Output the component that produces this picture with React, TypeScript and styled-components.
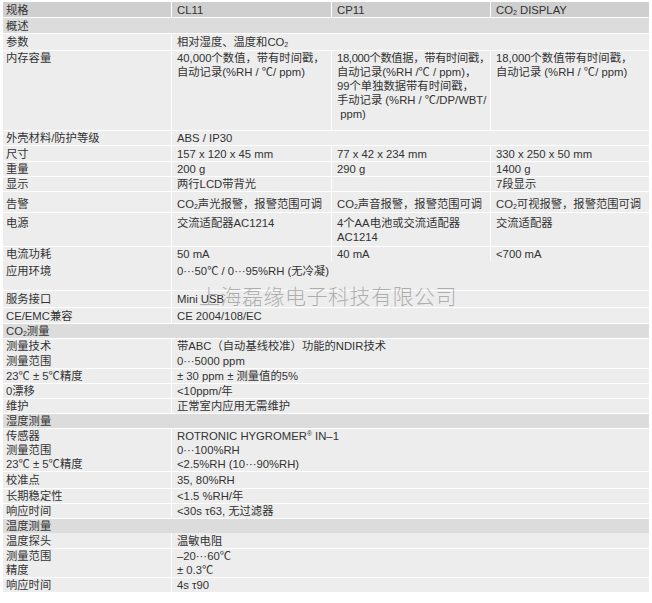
import React from "react";
import styled, { createGlobalStyle } from "styled-components";

const Global = createGlobalStyle`
  html, body { margin: 0; padding: 0; background: #ffffff; }
  body {
    font-family: "Liberation Sans", "Noto Sans CJK SC", Arial, sans-serif;
    color: #333333;
  }
`;

const Page = styled.div`
  position: relative;
  padding: 2px 3px;
  width: 646px;
`;

const Table = styled.div`
  display: flex;
  flex-direction: column;
  gap: 1px;
  width: 646px;
`;

const Row = styled.div<{ $h: number }>`
  display: grid;
  grid-template-columns: 168px 159px 158px 158px;
  column-gap: 1px;
  height: ${(p) => p.$h}px;
`;

type Kind = "head" | "section" | "body";

const bg: Record<Kind, string> = {
  head: "#cfcfcf",
  section: "#dcdcdc",
  body: "#ededed",
};

const Cell = styled.div<{ $kind: Kind; $span?: number; $pt?: number; $label?: boolean }>`
  grid-column: span ${(p) => p.$span ?? 1};
  background: ${(p) => bg[p.$kind]};
  display: flex;
  flex-direction: column;
  justify-content: ${(p) => (p.$pt === undefined ? "center" : "flex-start")};
  padding-top: ${(p) => p.$pt ?? 0}px;
  padding-left: ${(p) => (p.$label ? 3 : 5)}px;
  box-sizing: border-box;
  font-size: 11.3px;
  line-height: 14px;
  white-space: nowrap;
  overflow: visible;
  position: relative;
  z-index: 1;
`;

const Line = styled.span<{ $tight?: boolean }>`
  display: block;
  height: 14px;
  letter-spacing: ${(p) => (p.$tight ? "-0.35px" : "0")};
`;

const Sub = styled.span`
  font-size: 0.62em;
  vertical-align: -1px;
  line-height: 0;
`;

const Sup = styled.span`
  font-size: 0.6em;
  vertical-align: 4px;
  line-height: 0;
`;

const Watermark = styled.div`
  position: absolute;
  left: 199px;
  top: 282px;
  font-family: "Noto Sans CJK SC", sans-serif;
  font-weight: 300;
  font-size: 21px;
  line-height: 26px;
  letter-spacing: 0.5px;
  color: rgba(110, 110, 110, 0.5);
  white-space: nowrap;
  z-index: 2;
  pointer-events: none;
`;

const CO2 = () => (
  <>
    CO<Sub>2</Sub>
  </>
);

type Val = React.ReactNode | React.ReactNode[];

type RowSpec =
  | { type: "section"; h: number; label: React.ReactNode }
  | { type: "span"; h: number; label: React.ReactNode; value: Val; pt?: number }
  | { type: "three"; h: number; label: React.ReactNode; values: Val[]; pt?: number; tight?: number };

const rows: RowSpec[] = [
  { type: "section", h: 15, label: "概述" },
  { type: "span", h: 16, label: "参数", value: <>相对湿度、温度和<CO2 /></> },
  {
    type: "three",
    h: 79,
    pt: 0,
    tight: 1,
    label: "内存容量",
    values: [
      ["40,000个数值，带有时间戳，", "自动记录(%RH / ℃/ ppm)"],
      [
        "18,000个数值据，带有时间戳，",
        "自动记录(%RH /℃ / ppm)，",
        "99个单独数据带有时间戳，",
        "手动记录 (%RH / ℃/DP/WBT/",
        "\u00a0ppm)",
      ],
      ["18,000个数值带有时间戳，", "自动记录 (%RH / ℃/ ppm)"],
    ],
  },
  { type: "span", h: 14, label: "外壳材料/防护等级", value: "ABS / IP30" },
  {
    type: "three",
    h: 15,
    label: "尺寸",
    values: ["157 x 120 x 45 mm", "77 x 42 x 234 mm", "330 x 250 x 50 mm"],
  },
  { type: "three", h: 14, label: "重量", values: ["200 g", "290 g", "1400 g"] },
  { type: "three", h: 14, label: "显示", values: ["两行LCD带背光", "", "7段显示"] },
  {
    type: "three",
    h: 20,
    pt: 5,
    label: "告警",
    values: [
      <><CO2 />声光报警，报警范围可调</>,
      <><CO2 />声音报警，报警范围可调</>,
      <><CO2 />可视报警，报警范围可调</>,
    ],
  },
  {
    type: "three",
    h: 33,
    pt: 3,
    label: "电源",
    values: ["交流适配器AC1214", ["4个AA电池或交流适配器", "AC1214"], "交流适配器"],
  },
  { type: "three", h: 13, label: "电流功耗", values: ["50 mA", "40 mA", "<700 mA"] },
  { type: "span", h: 29, pt: 3, label: "应用环境", value: "0···50℃ / 0···95%RH (无冷凝)" },
  { type: "span", h: 16, label: "服务接口", value: "Mini USB" },
  { type: "span", h: 15, label: "CE/EMC兼容", value: "CE 2004/108/EC" },
  { type: "section", h: 14, label: <><CO2 />测量</> },
  { type: "span", h: 13, label: "测量技术", value: "带ABC（自动基线校准）功能的NDIR技术" },
  { type: "span", h: 15, label: "测量范围", value: "0···5000 ppm" },
  { type: "span", h: 14, label: "23℃ ± 5℃精度", value: "± 30 ppm ± 测量值的5%" },
  { type: "span", h: 14, label: "0漂移", value: "<10ppm/年" },
  { type: "span", h: 14, label: "维护", value: "正常室内应用无需维护" },
  { type: "section", h: 14, label: "湿度测量" },
  {
    type: "span",
    h: 13,
    label: "传感器",
    value: <>ROTRONIC HYGROMER<Sup>®</Sup> IN–1</>,
  },
  { type: "span", h: 13, label: "测量范围", value: "0···100%RH" },
  { type: "span", h: 14, label: "23℃ ± 5℃精度", value: "<2.5%RH (10···90%RH)" },
  { type: "span", h: 16, label: "校准点", value: "35, 80%RH" },
  { type: "span", h: 14, label: "长期稳定性", value: "<1.5 %RH/年" },
  { type: "span", h: 14, label: "响应时间", value: "<30s τ63, 无过滤器" },
  { type: "section", h: 13, label: "温度测量" },
  { type: "span", h: 15, label: "温度探头", value: "温敏电阻" },
  { type: "span", h: 13, label: "测量范围", value: "–20···60℃" },
  { type: "span", h: 14, label: "精度", value: "± 0.3℃" },
  { type: "span", h: 13, label: "响应时间", value: "4s τ90" },
];

const renderVal = (v: Val, tight?: boolean) =>
  Array.isArray(v) ? (
    v.map((l, i) => (
      <Line key={i} $tight={tight && i === 0}>
        {l}
      </Line>
    ))
  ) : (
    <Line>{v}</Line>
  );

export default function App() {
  return (
    <>
      <Global />
      <Page>
        <Table>
          <Row $h={15}>
            <Cell $kind="head" $label>
              <Line>规格</Line>
            </Cell>
            <Cell $kind="head">
              <Line>CL11</Line>
            </Cell>
            <Cell $kind="head">
              <Line>CP11</Line>
            </Cell>
            <Cell $kind="head">
              <Line>
                <CO2 /> DISPLAY
              </Line>
            </Cell>
          </Row>
          {rows.map((r, i) => {
            if (r.type === "section") {
              return (
                <Row key={i} $h={r.h}>
                  <Cell $kind="section" $span={4} $label>
                    <Line>{r.label}</Line>
                  </Cell>
                </Row>
              );
            }
            if (r.type === "span") {
              return (
                <Row key={i} $h={r.h}>
                  <Cell $kind="body" $label $pt={r.pt}>
                    <Line>{r.label}</Line>
                  </Cell>
                  <Cell $kind="body" $span={3} $pt={r.pt}>
                    {renderVal(r.value)}
                  </Cell>
                </Row>
              );
            }
            return (
              <Row key={i} $h={r.h}>
                <Cell $kind="body" $label $pt={r.pt}>
                  <Line>{r.label}</Line>
                </Cell>
                {r.values.map((v, j) => (
                  <Cell key={j} $kind="body" $pt={r.pt}>
                    {renderVal(v, j === 1 && !!r.tight)}
                  </Cell>
                ))}
              </Row>
            );
          })}
        </Table>
        <Watermark>上海磊缘电子科技有限公司</Watermark>
      </Page>
    </>
  );
}
